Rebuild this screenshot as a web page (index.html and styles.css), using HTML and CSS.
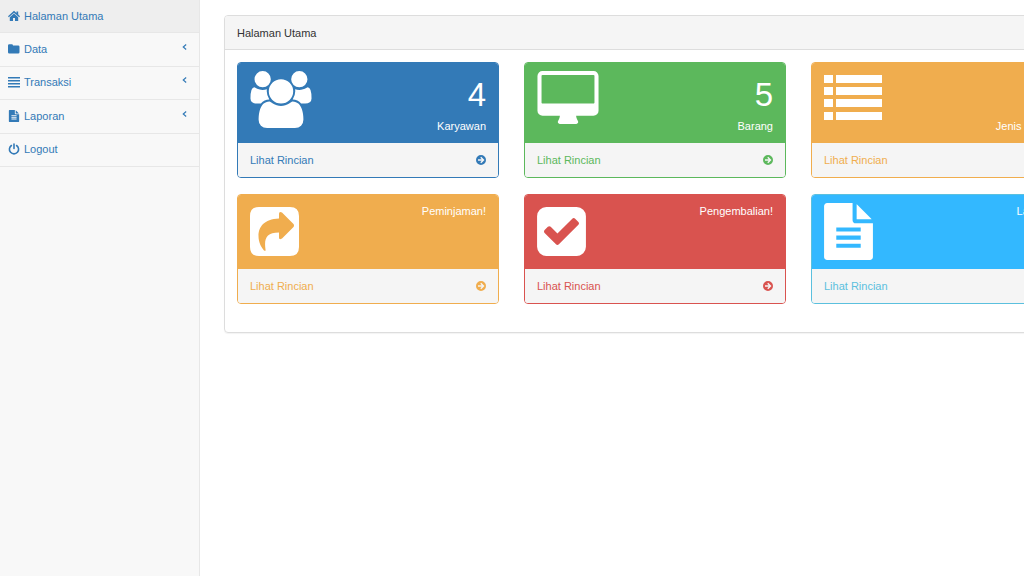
FILE: index.html
```html
<!DOCTYPE html>
<html lang="id">
<head>
    <meta charset="UTF-8">
    <meta name="viewport" content="width=device-width, initial-scale=1.0">
    <title>Halaman Utama</title>
    <link rel="stylesheet" href="styles.css">
</head>
<body>
    <!-- shared shapes -->
    <svg class="symbols" aria-hidden="true">
        <symbol id="go" viewBox="0 0 20 20">
            <path fill-rule="evenodd" d="M10 0a10 10 0 1 0 0 20a10 10 0 1 0 0-20zM10.500 3.500L17 10l-6.500 6.500l-2-2L11.500 11.500H4v-3h7.500L8.500 5.500z"/>
        </symbol>
        <symbol id="angle" viewBox="0 0 6 8">
            <path fill="none" stroke="currentColor" stroke-width="1.400" d="M5 1L1.500 4L5 7"/>
        </symbol>
        <symbol id="file" viewBox="128 0 1536 1792">
            <path fill-rule="evenodd" d="M1596 476q14 14 28 36h-472v-472q22 14 36 28zM1120 640h544v1056q0 40-28 68t-68 28h-1344q-40 0-68-28t-28-68v-1600q0-40 28-68t68-28h800v544q0 40 28 68t68 28zM512 768v128h768v-128zM512 1024v128h768v-128zM512 1280v128h768v-128z"/>
        </symbol>
    </svg>

    <div class="wrapper">
        <nav class="sidebar">
            <ul class="menu">
                <li><a class="active" href="#">
                    <svg class="menu-icon" viewBox="0 0 12 12"><path d="M6 .8L0 6.200l.8 1L6 2.700l5.200 4.500l.8-1L10.200 4.500V1.500H8.500V3zM6 3.500L1.800 7.200V11H5V8h2v3h3.200V7.200z"/></svg>
                    Halaman Utama</a></li>
                <li><a href="#">
                    <svg class="menu-icon" viewBox="0 0 12 12"><path d="M0 2.500q0-1.300 1.300-1.300h2.400q1.300 0 1.300 1.300h5.200q1.300 0 1.300 1.300v5.400q0 1.300-1.300 1.300H1.300Q0 10.500 0 9.200z"/></svg>
                    Data <svg class="arrow"><use href="#angle"/></svg></a></li>
                <li><a href="#">
                    <svg class="menu-icon" viewBox="0 0 12 12"><path d="M0 1h12v1.600H0zM0 4h12v1.600H0zM0 7h12v1.600H0zM0 10h12v1.600H0z"/></svg>
                    Transaksi <svg class="arrow"><use href="#angle"/></svg></a></li>
                <li><a href="#">
                    <svg class="menu-icon"><use href="#file"/></svg>
                    Laporan <svg class="arrow"><use href="#angle"/></svg></a></li>
                <li><a href="#">
                    <svg class="menu-icon" viewBox="0 0 12 12"><path fill="none" stroke="currentColor" stroke-width="1.600" stroke-linecap="round" d="M3.400 2.500a4.600 4.600 0 1 0 5.200 0M6 1v4.500"/></svg>
                    Logout</a></li>
            </ul>
        </nav>

        <main class="content">
            <section class="panel">
                <h1 class="panel-heading">Halaman Utama</h1>
                <div class="cards">
                    <div class="card blue">
                        <div class="card-top">
                            <svg class="wide" viewBox="0 0 1920 1792"><path d="M593 896q-162 5-265 128h-134q-82 0-138-40.500t-56-118.500q0-353 124-353 6 0 43.500 21t97.500 42.500 119 21.500q67 0 133-23-5 37-5 66 0 139 81 256zm1071 637q0 120-73 189.500t-194 69.500h-874q-121 0-194-69.500t-73-189.500q0-53 3.500-103.500t14-109 26.500-108.500 43-97.500 62-81 85.500-53.500 111.500-20q10 0 43 21.500t73 48 107 48 135 21.500 135-21.500 107-48 73-48 43-21.500q61 0 111.500 20t85.500 53.500 62 81 43 97.500 26.500 108.500 14 109 3.500 103.500zm-1024-1277q0 106-75 181t-181 75-181-75-75-181 75-181 181-75 181 75 75 181zm704 384q0 159-112.500 271.500t-271.500 112.500-271.500-112.500-112.500-271.500 112.500-271.500 271.500-112.500 271.500 112.500 112.500 271.500zm576 225q0 78-56 118.500t-138 40.500h-134q-103-123-265-128 81-117 81-256 0-29-5-66 66 23 133 23 59 0 119-21.500t97.500-42.500 43.500-21q124 0 124 353zm-128-609q0 106-75 181t-181 75-181-75-75-181 75-181 181-75 181 75 75 181z"/></svg>
                            <div class="info"><div class="count">4</div><div>Karyawan</div></div>
                        </div>
                        <a class="card-link" href="#">Lihat Rincian <svg class="go"><use href="#go"/></svg></a>
                    </div>
                    <div class="card green">
                        <div class="card-top">
                            <svg class="wide" viewBox="0 0 1920 1792"><path d="M1792 992v-832q0-13-9.500-22.500t-22.500-9.500h-1600q-13 0-22.500 9.500t-9.500 22.500v832q0 13 9.500 22.500t22.500 9.500h1600q13 0 22.500-9.500t9.500-22.500zm128-832v1088q0 66-47 113t-113 47h-544q0 37 16 77.500t32 71 16 43.500q0 26-19 45t-45 19h-512q-26 0-45-19t-19-45q0-14 16-44t32-70 16-78h-544q-66 0-113-47t-47-113v-1088q0-66 47-113t113-47h1600q66 0 113 47t47 113z"/></svg>
                            <div class="info"><div class="count">5</div><div>Barang</div></div>
                        </div>
                        <a class="card-link" href="#">Lihat Rincian <svg class="go"><use href="#go"/></svg></a>
                    </div>
                    <div class="card orange">
                        <div class="card-top">
                            <svg class="wide" viewBox="0 0 62 57"><path d="M0 4h9v8H0zM12 4h46v8H12zM0 16h9v8H0zM12 16h46v8H12zM0 28h9v8H0zM12 28h46v8H12zM0 41h9v8H0zM12 41h46v8H12z"/></svg>
                            <div class="info"><div class="count">3</div><div>Jenis Barang</div></div>
                        </div>
                        <a class="card-link" href="#">Lihat Rincian <svg class="go"><use href="#go"/></svg></a>
                    </div>
                    <div class="card orange">
                        <div class="card-top">
                            <svg class="narrow" viewBox="0 0 49 57"><path fill-rule="evenodd" d="M9 4h31q9 0 9 9v31q0 9-9 9H9q-9 0-9-9V13q0-9 9-9zM29 11V15.500C14 16 8.500 24 8.500 33C8.500 39 11 44 14 47.500q2 1 1.500-1C14 36 16 29.500 29 29.500V34.500q0 3 3 1L43.500 24q1-1.500 0-3L32 9.500q-3-1.500-3 1.500z"/></svg>
                            <div class="info">Peminjaman!</div>
                        </div>
                        <a class="card-link" href="#">Lihat Rincian <svg class="go"><use href="#go"/></svg></a>
                    </div>
                    <div class="card red">
                        <div class="card-top">
                            <svg class="narrow" viewBox="128 0 1536 1792"><path d="M813 1299l614-614q19-19 19-45t-19-45l-102-102q-19-19-45-19t-45 19l-467 467-211-211q-19-19-45-19t-45 19l-102 102q-19 19-19 45t19 45l358 358q19 19 45 19t45-19zm851-883v960q0 119-84.500 203.500t-203.500 84.500h-960q-119 0-203.500-84.500t-84.500-203.500v-960q0-119 84.500-203.500t203.500-84.500h960q119 0 203.500 84.500t84.500 203.500z"/></svg>
                            <div class="info">Pengembalian!</div>
                        </div>
                        <a class="card-link" href="#">Lihat Rincian <svg class="go"><use href="#go"/></svg></a>
                    </div>
                    <div class="card sky">
                        <div class="card-top">
                            <svg class="narrow"><use href="#file"/></svg>
                            <div class="info">Laporan!</div>
                        </div>
                        <a class="card-link" href="#">Lihat Rincian <svg class="go"><use href="#go"/></svg></a>
                    </div>
                </div>
            </section>
        </main>
    </div>
</body>
</html>
```
FILE: styles.css
```css
* {
    box-sizing: border-box;
}
html {
    overflow-x: hidden;
}
body {
    margin: 0;
    min-width: 1110px;
    font-family: "Liberation Sans", Arial, sans-serif;
    font-size: 11px;
    line-height: 16px;
    color: #333;
    background: #fff;
}
a {
    color: #337ab7;
    text-decoration: none;
}
svg {
    fill: currentColor;
}
.symbols {
    display: none;
}
.wrapper {
    display: flex;
    min-height: 100vh;
}

/* sidebar */
.sidebar {
    width: 200px;
    flex-shrink: 0;
    background: #f8f8f8;
    border-right: 1px solid #e7e7e7;
}
.menu {
    display: grid;
    grid-template-rows: repeat(5, 1fr);
    height: 167px;
    margin: 0;
    padding: 0;
    list-style: none;
}
.menu li {
    display: grid;
    border-bottom: 1px solid #e7e7e7;
}
.menu a {
    display: flex;
    align-items: center;
    gap: 4px;
    padding: 0 12px 1px 8px;
}
.menu .active {
    background: #eee;
}
.menu-icon {
    width: 12px;
    height: 12px;
}
.arrow {
    width: 5px;
    height: 8px;
    margin: 0 0 4px auto;
}

/* main panel */
.content {
    flex: 1;
    padding: 15px 24px;
}
.panel {
    border: 1px solid #ddd;
    border-radius: 4px;
    box-shadow: 0 1px 1px rgba(0, 0, 0, 0.05);
}
.panel-heading {
    margin: 0;
    padding: 9px 12px 8px;
    font-size: 11px;
    font-weight: normal;
    background: #f5f5f5;
    border-bottom: 1px solid #ddd;
    border-radius: 3px 3px 0 0;
}
.cards {
    display: grid;
    grid-template-columns: repeat(3, 1fr);
    gap: 16px 25px;
    padding: 12px 12px 28px;
}

/* cards */
.card {
    color: #337ab7;
    border: 1px solid currentColor;
    border-radius: 4px;
    overflow: hidden;
}
.green {
    color: #5cb85c;
}
.orange {
    color: #f0ad4e;
}
.red {
    color: #d9534f;
}
.sky {
    color: #5bc0de;
}
.card-top {
    display: flex;
    justify-content: space-between;
    padding: 8px 12px 9px;
    background: currentColor;
}
.sky .card-top {
    background: #33b8ff;
}
.card-top > * {
    color: #fff;
}
.wide {
    width: 62px;
    height: 57px;
}
.narrow {
    width: 49px;
    height: 57px;
}
.info {
    text-align: right;
}
.count {
    padding: 4px 0 3px;
    font-size: 33px;
    line-height: 40px;
}
.card-link {
    display: flex;
    justify-content: space-between;
    align-items: center;
    padding: 9px 12px;
    color: inherit;
    background: #f5f5f5;
}
.go {
    width: 10px;
    height: 10px;
}
```
